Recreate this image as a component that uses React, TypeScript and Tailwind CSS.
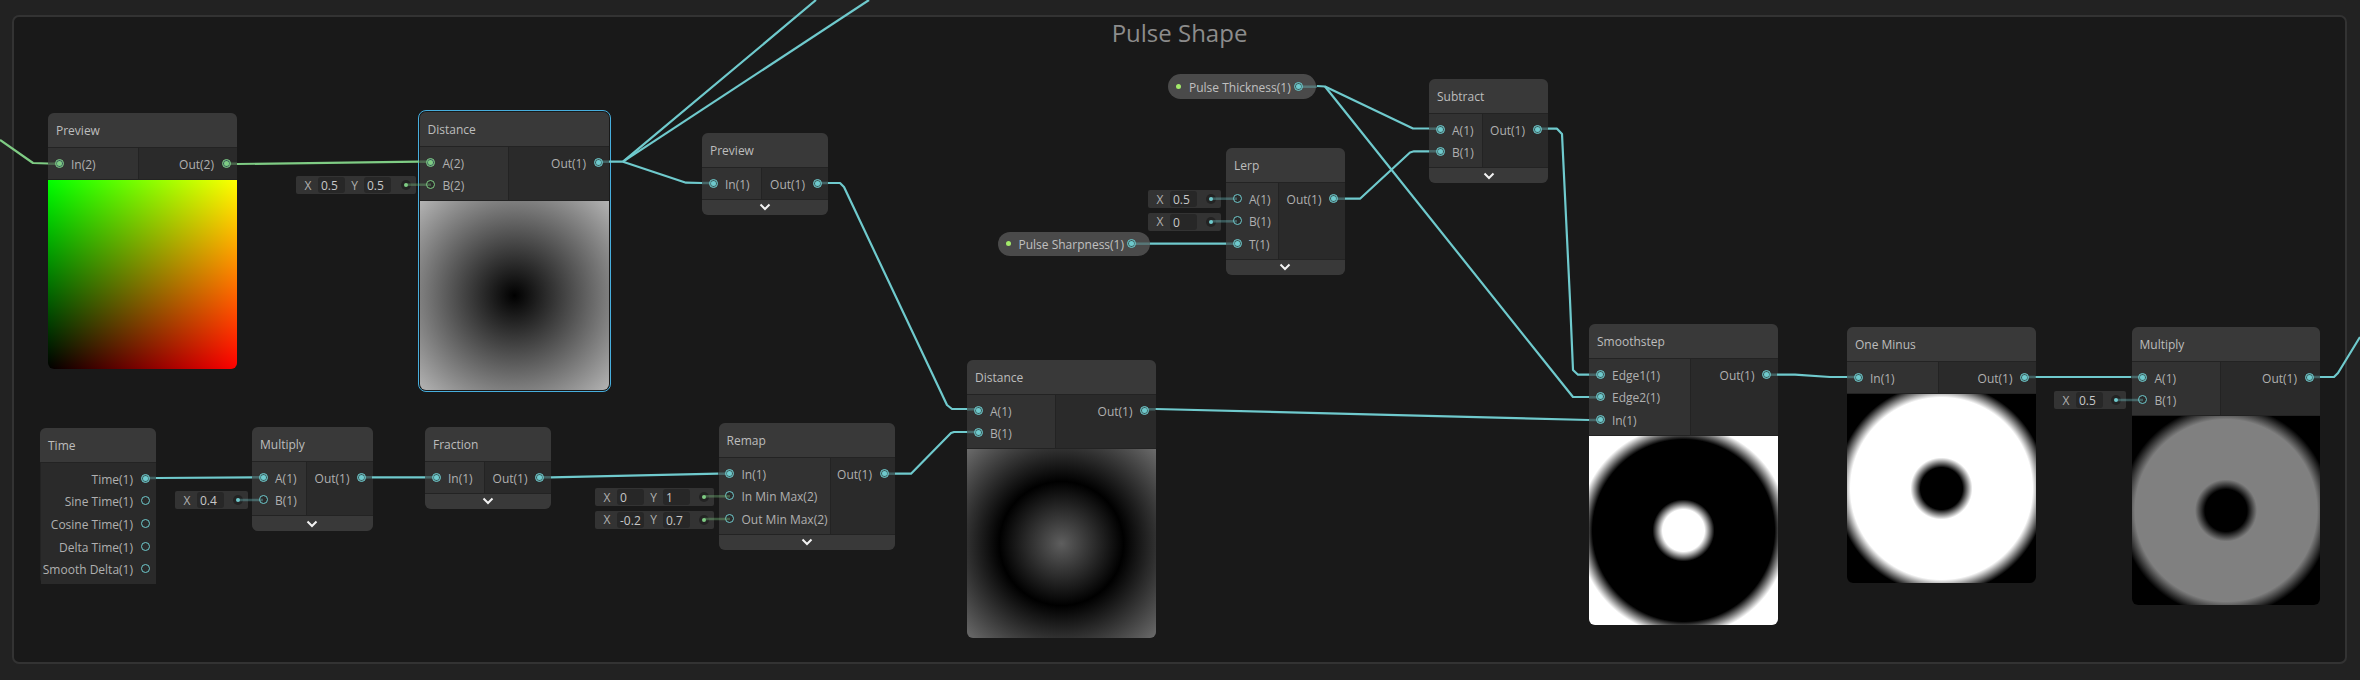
import type { ReactNode } from 'react';

const CYAN = '#6fcacd';
const GREEN = '#7fcc84';

// Port sits on a row, filled when something is plugged in
const Port = ({ color, on }: { color: string; on?: boolean }) => (
  <span className={`flex h-[9px] w-[9px] shrink-0 items-center justify-center rounded-full border-[1.2px] ${on ? 'bg-[#3b5c5c]' : 'bg-[#2a2a2a]'}`} style={{ borderColor: color }}>
    {on && <span className="h-[5px] w-[5px] rounded-full" style={{ backgroundColor: color }} />}
  </span>
);

const Chevron = () => (
  <svg width="12" height="8" viewBox="0 0 12 8" fill="none">
    <polyline points="1.5,1.5 6,6 10.5,1.5" stroke="#f2f2f2" strokeWidth="2" />
  </svg>
);

type Row = { label: string; on?: boolean };

type NodeProps = {
  className: string;
  title: string;
  leftClass?: string;
  color?: string;
  inColor?: string;
  inputs?: Row[];
  outputs?: Row[];
  footer?: boolean;
  selected?: boolean;
  children?: ReactNode;
};

const GraphNode = ({ className, title, leftClass, color = CYAN, inColor, inputs = [], outputs = [], footer, selected, children }: NodeProps) => (
  <div className={`absolute flex flex-col overflow-visible rounded-[6px] bg-[#232323] ${className} ${selected ? 'outline-[1.5px] outline-offset-[1px] outline-[#47aedd]' : ''}`}>
    <div className="flex h-[34px] shrink-0 items-center rounded-t-[6px] bg-[#393939] px-[8px] pt-[1px] text-[#bdbdbd]">{title}</div>
    <div className="mt-px flex">
      {inputs.length > 0 && (
        <div className={`flex shrink-0 flex-col bg-[#323232] py-[4px] pl-[6.5px] ${leftClass}`}>
          {inputs.map((r) => (
            <div key={r.label} className="flex h-[22.67px] items-center gap-[7.5px]">
              <Port color={inColor ?? color} on={r.on} />
              <span className="whitespace-nowrap pt-[3px] text-[#b0b0b0]">{r.label}</span>
            </div>
          ))}
        </div>
      )}
      <div className="flex flex-1 flex-col items-end bg-[#2a2a2a] py-[4px] pr-[6.5px] last:ml-px">
        {outputs.map((r) => (
          <div key={r.label} className="flex h-[22.67px] items-center gap-[7.5px]">
            <span className="whitespace-nowrap pt-[3px] text-[#b0b0b0]">{r.label}</span>
            <Port color={color} on={r.on} />
          </div>
        ))}
      </div>
    </div>
    {footer && (
      <div className="mt-px flex h-[15px] items-center justify-center rounded-b-[6px] bg-[#393939]">
        <Chevron />
      </div>
    )}
    {children}
  </div>
);

const Preview = ({ className }: { className: string }) => <div className={`mt-px h-[189px] rounded-b-[6px] ${className}`} />;

const Field = ({ className, x, y, color = CYAN }: { className: string; x: string; y?: string; color?: string }) => (
  <div className={`absolute flex h-[18px] items-center rounded-[2px] bg-[#333333] pl-[2px] leading-[17px] text-[#b0b0b0] ${className}`}>
    <span className="w-[20px] text-center">X</span>
    <span className="h-[16px] w-[27px] rounded-[3px] bg-[#272727] pl-[3px] text-[#c8c8c8]">{x}</span>
    {y && <span className="w-[19px] text-center">Y</span>}
    {y && <span className="h-[16px] w-[27px] rounded-[3px] bg-[#272727] pl-[3px] text-[#c8c8c8]">{y}</span>}
    <span className="mr-[5px] ml-auto flex h-[10px] w-[10px] items-center justify-center rounded-full bg-[#232323]">
      <span className="h-[4px] w-[4px] rounded-full" style={{ backgroundColor: color }} />
    </span>
  </div>
);

const Pill = ({ className, label }: { className: string; label: string }) => (
  <div className={`absolute flex h-[24.5px] items-center rounded-full bg-[#4a4a4a] pl-[8px] text-[#c0c0c0] ${className}`}>
    <span className="mr-[8px] h-[5px] w-[5px] shrink-0 rounded-full bg-[#a3ea6a]" />
    <span className="whitespace-nowrap pt-[3px]">{label}</span>
    <span className="mr-[13.5px] ml-auto"><Port color={CYAN} on /></span>
  </div>
);

const wires: [string, string][] = [
  ['0,140 33,163 48,163.5', GREEN],
  ['237,164 419,161.7', GREEN],
  ['609,161.7 623,161.7 816,0', CYAN],
  ['623,161.7 869,0', CYAN],
  ['623,161.7 686,182.7 702,183', CYAN],
  ['828,183 840,183 844,187 947,405 952,409 967,409', CYAN],
  ['895,473.7 911,473.7 951,433 954,432 967,432', CYAN],
  ['156,478 252,477.3', CYAN],
  ['372,477.3 425,477.3', CYAN],
  ['551,477.3 718,473.7', CYAN],
  ['1155.5,409 1589,420', CYAN],
  ['1317,86 1325,86.5 1413,128.5 1429,128.5', CYAN],
  ['1325,86.5 1573,397 1589,397', CYAN],
  ['1345,198.7 1360,198.7 1410,152.5 1414,151.3 1429,151.3', CYAN],
  ['1150,243.7 1226,243.7', CYAN],
  ['1548,128.7 1557,128.7 1562,134 1570,300 1573,370 1578,374.7 1589,374.7', CYAN],
  ['1777,374.7 1795,374.7 1830,377 1847,377', CYAN],
  ['2035.5,377 2131,377', CYAN],
  ['2320,377 2334,377 2338,373 2360,337', CYAN],
];

// faint stubs between a node edge and its port
const stubs: [number, number, number, string][] = [
  [48, 59, 163.7, GREEN], [226, 237, 163.7, GREEN], [419, 431, 161.7, GREEN], [405, 431, 184.7, GREEN], [597, 609, 161.7, CYAN],
  [702, 714, 183, CYAN], [817, 828, 183, CYAN],
  [145, 156, 478, CYAN], [238, 263, 500, CYAN], [252, 263, 477.3, CYAN], [362, 372, 477.3, CYAN], [425, 436, 477.3, CYAN], [539, 551, 477.3, CYAN],
  [704, 730, 496.3, GREEN], [704, 730, 519, GREEN], [718, 730, 473.7, CYAN], [885, 895, 473.7, CYAN],
  [967, 978, 409.3, CYAN], [967, 978, 432, CYAN], [1144, 1155, 409.3, CYAN],
  [1297, 1317, 86.7, CYAN], [1131, 1150, 243.7, CYAN], [1211, 1237, 198.7, CYAN], [1211, 1237, 221.3, CYAN], [1226, 1237, 243.7, CYAN], [1333, 1345, 198.7, CYAN],
  [1429, 1440, 128.7, CYAN], [1429, 1440, 151.3, CYAN], [1537, 1548, 128.7, CYAN],
  [1589, 1600, 374.7, CYAN], [1589, 1600, 397.3, CYAN], [1589, 1600, 420, CYAN], [1767, 1777, 374.7, CYAN],
  [1847, 1858, 377, CYAN], [2024, 2035, 377, CYAN], [2117, 2143, 400, CYAN], [2131, 2143, 377, CYAN], [2309, 2320, 377, CYAN],
];

export default function App() {
  return (
    <div className="relative h-[680px] w-[2360px] overflow-hidden bg-[#222222] p-[15px_13px_16px_12px] font-['Open_Sans',sans-serif] text-[12px] leading-none">
      <div className="h-full rounded-[7px] border-2 border-[#333333] bg-[#191919] text-center text-[24px] leading-[32px] text-[#8c8c8c]">
        Pulse Shape
      </div>

      <GraphNode className="top-[113px] left-[48px] w-[189px]" title="Preview" leftClass="w-[90px]" color={GREEN} inputs={[{ label: 'In(2)', on: true }]} outputs={[{ label: 'Out(2)', on: true }]}>
        <Preview className="bg-[linear-gradient(to_right,#000,#f00),linear-gradient(to_top,#000,#0f0)] bg-blend-screen" />
      </GraphNode>

      <Field className="top-[176px] left-[296px] w-[120px]" x="0.5" y="0.5" color={GREEN} />
      <GraphNode className="top-[112px] left-[419.5px] w-[189.5px]" title="Distance" leftClass="w-[88px]" inColor={GREEN} selected inputs={[{ label: 'A(2)', on: true }, { label: 'B(2)' }]} outputs={[{ label: 'Out(1)', on: true }]}>
        <Preview className="bg-[radial-gradient(circle,#000_0,#b4b4b4_134px)]" />
      </GraphNode>

      <GraphNode className="top-[133px] left-[702px] w-[126px]" title="Preview" leftClass="w-[59px]" footer inputs={[{ label: 'In(1)', on: true }]} outputs={[{ label: 'Out(1)', on: true }]} />

      <GraphNode className="top-[428px] left-[40px] w-[116px]" title="Time" outputs={[{ label: 'Time(1)', on: true }, { label: 'Sine Time(1)' }, { label: 'Cosine Time(1)' }, { label: 'Delta Time(1)' }, { label: 'Smooth Delta(1)' }]} />

      <Field className="top-[491px] left-[175px] w-[73px]" x="0.4" />
      <GraphNode className="top-[427px] left-[252px] w-[120.5px]" title="Multiply" leftClass="w-[54px]" footer inputs={[{ label: 'A(1)', on: true }, { label: 'B(1)' }]} outputs={[{ label: 'Out(1)', on: true }]} />

      <GraphNode className="top-[427px] left-[425px] w-[125.5px]" title="Fraction" leftClass="w-[59px]" footer inputs={[{ label: 'In(1)', on: true }]} outputs={[{ label: 'Out(1)', on: true }]} />

      <Field className="top-[488px] left-[595px] w-[119px]" x="0" y="1" color={GREEN} />
      <Field className="top-[510.5px] left-[595px] w-[119px]" x="-0.2" y="0.7" color={GREEN} />
      <GraphNode className="top-[423px] left-[718.5px] w-[176.5px]" title="Remap" leftClass="w-[111px]" footer inputs={[{ label: 'In(1)', on: true }, { label: 'In Min Max(2)' }, { label: 'Out Min Max(2)' }]} outputs={[{ label: 'Out(1)', on: true }]} />

      <GraphNode className="top-[360px] left-[967px] w-[188.5px]" title="Distance" leftClass="w-[88px]" inputs={[{ label: 'A(1)', on: true }, { label: 'B(1)', on: true }]} outputs={[{ label: 'Out(1)', on: true }]}>
        <Preview className="bg-[radial-gradient(circle,#5e5e5e_0,#000_62px,#6c6c6c_134px)]" />
      </GraphNode>

      <Pill className="top-[74px] left-[1168px] w-[148px]" label="Pulse Thickness(1)" />
      <Pill className="top-[231.5px] left-[997.5px] w-[152px]" label="Pulse Sharpness(1)" />

      <Field className="top-[190px] left-[1148px] w-[73px]" x="0.5" />
      <Field className="top-[212.5px] left-[1148px] w-[73px]" x="0" />
      <GraphNode className="top-[148px] left-[1226px] w-[118.5px]" title="Lerp" leftClass="w-[52px]" footer inputs={[{ label: 'A(1)' }, { label: 'B(1)' }, { label: 'T(1)', on: true }]} outputs={[{ label: 'Out(1)', on: true }]} />

      <GraphNode className="top-[79px] left-[1429px] w-[119px]" title="Subtract" leftClass="w-[53px]" footer inputs={[{ label: 'A(1)', on: true }, { label: 'B(1)', on: true }]} outputs={[{ label: 'Out(1)', on: true }]} />

      <GraphNode className="top-[324px] left-[1589px] w-[188.5px]" title="Smoothstep" leftClass="w-[101px]" inputs={[{ label: 'Edge1(1)', on: true }, { label: 'Edge2(1)', on: true }, { label: 'In(1)', on: true }]} outputs={[{ label: 'Out(1)', on: true }]}>
        <Preview className="bg-[radial-gradient(circle,#fff_21px,#000_31px,#000_91px,#fff_105px)]" />
      </GraphNode>

      <GraphNode className="top-[327px] left-[1847px] w-[188.5px]" title="One Minus" leftClass="w-[91px]" inputs={[{ label: 'In(1)', on: true }]} outputs={[{ label: 'Out(1)', on: true }]}>
        <Preview className="bg-[radial-gradient(circle,#000_21px,#fff_31px,#fff_91px,#000_105px)]" />
      </GraphNode>

      <Field className="top-[391px] left-[2054px] w-[72px]" x="0.5" />
      <GraphNode className="top-[327px] left-[2131.5px] w-[188.5px]" title="Multiply" leftClass="w-[88px]" footer={false} inputs={[{ label: 'A(1)', on: true }, { label: 'B(1)' }]} outputs={[{ label: 'Out(1)', on: true }]}>
        <Preview className="bg-[radial-gradient(circle,#000_21px,#808080_31px,#808080_91px,#000_105px)]" />
      </GraphNode>

      <svg className="pointer-events-none absolute inset-0" width="2360" height="680" fill="none">
        {stubs.map(([a, b, y, c], i) => (
          <line key={i} x1={a} x2={b} y1={y} y2={y} stroke={c} strokeWidth="2.5" strokeOpacity="0.35" />
        ))}
        {wires.map(([points, c], i) => (
          <polyline key={i} points={points} stroke={c} strokeWidth="2.2" strokeLinejoin="round" />
        ))}
      </svg>
    </div>
  );
}
